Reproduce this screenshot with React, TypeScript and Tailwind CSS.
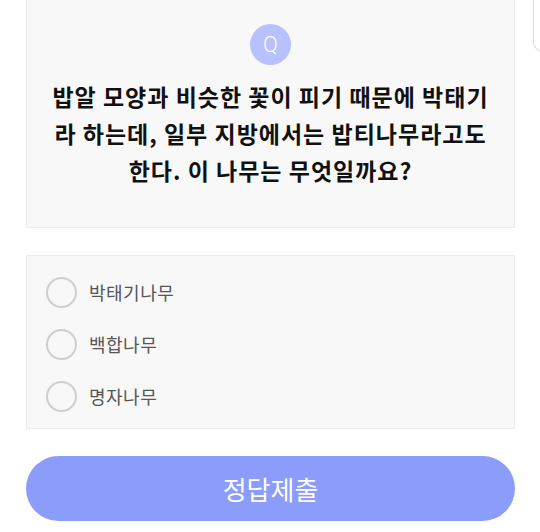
const options = ['박태기나무', '백합나무', '명자나무'];

export default function App() {
  return (
    <div
      className="flex h-[532px] w-[540px] overflow-hidden bg-white"
      style={{ fontFamily: '"Noto Sans CJK KR", "Noto Sans", sans-serif' }}
    >
      <div className="w-[515px] shrink-0 pl-[26px]">
        {/* 문제 */}
        <div className="flex flex-col items-center border-x border-b border-[#ebebeb] bg-[#f8f8f8] px-[25px] pb-[38px] pt-[24px]">
          <div
            className="flex h-[41px] w-[41px] items-center justify-center rounded-full bg-[#b9c0fe] text-[22px] font-light text-white"
            style={{ fontFamily: 'Roboto, sans-serif' }}
          >
            Q
          </div>
          <p className="mt-[13px] text-center text-[23px] font-bold leading-[37px] tracking-[1px] text-[#111]">
            밥알 모양과 비슷한 꽃이 피기 때문에 박태기라 하는데, 일부 지방에서는 밥티나무라고도 한다. 이 나무는 무엇일까요?
          </p>
        </div>

        {/* 보기 */}
        <div className="mt-[27px] flex flex-col border border-[#ebebeb] bg-[#f8f8f8] px-[19px] pb-[6px] pt-[10px]">
          {options.map((option) => (
            <label key={option} className="flex h-[52px] cursor-pointer items-center gap-[12px]">
              <span className="h-[31px] w-[31px] shrink-0 rounded-full border-2 border-[#cfcfcf] bg-[#f8f8f8]" />
              <span className="text-[18px] tracking-[0.5px] text-[#555]">{option}</span>
            </label>
          ))}
        </div>

        {/* 제출 버튼 */}
        <button
          type="button"
          className="mt-[27px] flex h-[65px] w-full items-center justify-center rounded-full bg-[#8c9cfb] text-[26px] text-white"
        >
          정답제출
        </button>
      </div>

      <div className="ml-[18px] h-[52px] w-[20px] shrink-0 rounded-bl-[10px] border-b border-l border-[#dcdcdc]" />
    </div>
  );
}
